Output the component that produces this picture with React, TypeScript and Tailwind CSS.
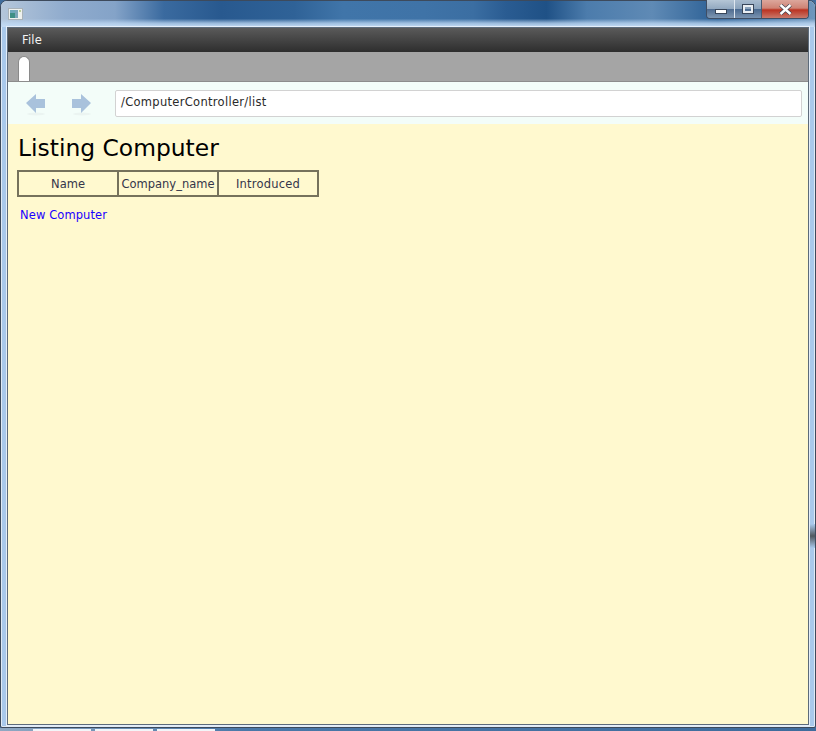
export default function App() {
  return (
    <div className="relative flex h-[731px] w-[816px] flex-col overflow-hidden bg-[#3f6c9c] font-['DejaVu_Sans',sans-serif]">
      {/* window frame */}
      <div className="flex h-[728px] shrink-0 flex-col overflow-hidden rounded-t-[7px] rounded-b-[2px] border border-[#3d4a5c] bg-[#a9c9eb] shadow-[inset_0_0_0_1px_#dfeaf5]">
        {/* title bar */}
        <div className="flex h-[26px] shrink-0 items-start bg-[linear-gradient(180deg,rgba(190,216,243,0)_0%,rgba(190,216,243,0)_68%,rgba(190,216,243,0.75)_85%,#c4dcf5_100%),linear-gradient(90deg,#b4c6da_0%,#8fabcd_8%,#84a3c8_14%,#3a6a9f_20%,#28598f_27%,#2f6297_36%,#4075a9_42%,#3f73a7_52%,#3b6ea2_58%,#2a5c92_62%,#1f5186_67%,#4c7cac_72%,#5f8ab5_80%,#2c6095_88%,#6f97bd_100%)] pl-[7px] pt-[7px]">
          <svg width="15" height="12" viewBox="0 0 15 12">
            <rect x="0" y="0" width="15" height="12" fill="#eef1ee" />
            <rect x="0.5" y="0.5" width="14" height="11" fill="none" stroke="#a9b2b8" />
            <rect x="2" y="2" width="5" height="8" fill="#3e8f85" />
            <rect x="2" y="2" width="5" height="3" fill="#6fa8bb" />
            <rect x="7" y="2" width="3" height="8" fill="#7aa6b8" />
            <rect x="11" y="2" width="2" height="2" fill="#b8cc9a" />
          </svg>
        </div>

        {/* client area */}
        <div className="mx-[6px] flex h-[698px] shrink-0 flex-col border border-[#5d6b7a] shadow-[0_0_0_1px_#e4eef9]">
          <div className="flex h-[24px] shrink-0 items-center bg-[linear-gradient(180deg,#5a5a5a_0%,#2e2e2e_100%)] pl-[14px] pt-[1px] text-[11.5px] tracking-[0.2px] text-[#f4f4f4]">
            File
          </div>
          <div className="flex h-[30px] shrink-0 items-end border-b border-[#8c8c8c] bg-[#a5a5a5] pl-[10px]">
            <div className="h-[25px] w-[12px] rounded-t-[6px] border border-b-0 border-[#8a8a8a] bg-white" />
          </div>
          <div className="flex h-[42px] shrink-0 items-center bg-[#f3fdf9] pl-[18px] pr-[6px]">
            <svg width="20" height="24" viewBox="0 0 20 24" className="mt-[4px]">
              <ellipse cx="10" cy="21" rx="9" ry="1.5" fill="#ebf4f1" />
              <path d="M0 10 L10 1 V6 H19 V15 H10 V20 Z" fill="#a9c2dc" />
            </svg>
            <svg width="20" height="24" viewBox="0 0 20 24" className="ml-[26px] mt-[4px]">
              <ellipse cx="10" cy="21" rx="9" ry="1.5" fill="#ebf4f1" />
              <path d="M19 10 L9 1 V6 H0 V15 H9 V20 Z" fill="#a9c2dc" />
            </svg>
            <div className="ml-[23px] flex h-[27px] flex-1 items-center rounded-[2px] border border-[#d2d2d2] bg-white pl-[5px] text-[11.5px] tracking-[0.3px] text-[#2a2a2a]">
              /ComputerController/list
            </div>
          </div>
          <div className="flex-1 bg-[#fff9cf] pl-[10px]">
            <h1 className="mt-[7px] text-[23.4px] leading-[34px] text-black">Listing Computer</h1>
            <div className="-ml-px mt-[5px] flex h-[27px] w-[302px] border-2 border-[#76725c] text-[11.5px] text-[#35354a]">
              <div className="flex w-[100px] items-center justify-center border-r-2 border-[#76725c] pt-[2px]">Name</div>
              <div className="flex w-[100px] items-center justify-center border-r-2 border-[#76725c] pt-[2px]">Company_name</div>
              <div className="flex flex-1 items-center justify-center pt-[2px] tracking-[0.2px]">Introduced</div>
            </div>
            <a className="ml-[2px] mt-[11px] block text-[11.5px] leading-[14px] tracking-[0.1px] text-[#1a00ff]">New Computer</a>
          </div>
        </div>
      </div>

      {/* window buttons */}
      <div className="absolute right-[7px] top-0 flex h-[19px] w-[103px] overflow-hidden rounded-b-[4px] border border-t-0 border-[#3f4e64]">
        <div className="flex w-[28px] items-center justify-center border-r border-[#dfe7ef] bg-[linear-gradient(180deg,#b5c6d6_0%,#93a9c0_48%,#4f6c90_52%,#7f97b2_100%)]">
          <div className="mt-[5px] h-[5px] w-[12px] border border-[#38465a] bg-white" />
        </div>
        <div className="flex w-[27px] items-center justify-center border-r border-[#4a5a70] bg-[linear-gradient(180deg,#a9bccf_0%,#8aa2bb_48%,#4a6a90_52%,#7a93b0_100%)]">
          <div className="h-[8px] w-[10px] border-2 border-[#e8edf2] outline outline-1 outline-[#38465a]" />
        </div>
        <div className="flex flex-1 items-center justify-center bg-[linear-gradient(180deg,#dca79c_0%,#cf8375_45%,#bb3322_55%,#c9786a_100%)]">
          <svg width="13" height="11" viewBox="0 0 13 11">
            <path d="M1.5 1 L11.5 10 M11.5 1 L1.5 10" stroke="#39424f" strokeWidth="3.8" />
            <path d="M1.5 1 L11.5 10 M11.5 1 L1.5 10" stroke="#ffffff" strokeWidth="2.4" />
          </svg>
        </div>
      </div>

      {/* darker patch on the right edge of the frame */}
      <div className="absolute right-[1px] top-[524px] h-[24px] w-[5px] bg-[linear-gradient(180deg,#a9c9eb,#50585f,#a9c9eb)]" />

      {/* windows peeking out under the frame */}
      <div className="flex flex-1 items-end bg-[linear-gradient(90deg,#8fa8c2_0%,#4a78a8_30%,#3f6c9c_100%)] pl-[33px]">
        <div className="h-[2px] w-[58px] bg-[#f2f5f8]" />
        <div className="ml-[4px] h-[2px] w-[58px] bg-[#f2f5f8]" />
        <div className="ml-[4px] h-[2px] w-[58px] bg-[#f2f5f8]" />
      </div>
    </div>
  )
}
